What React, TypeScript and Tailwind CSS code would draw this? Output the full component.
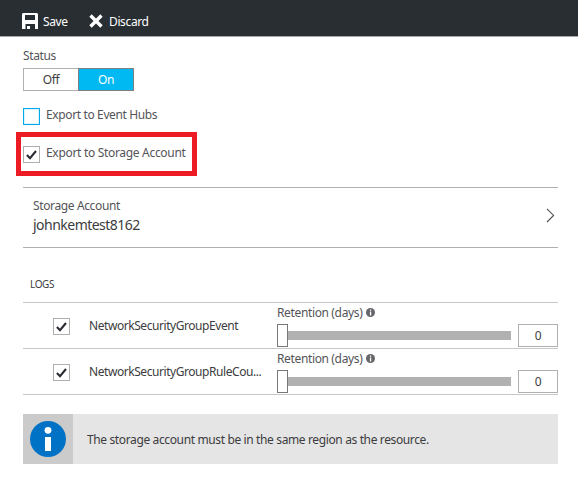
import React from "react";

function Check() {
  return (
    <svg width="11" height="10" viewBox="0 0 11 10" fill="none" className="block">
      <path d="M0.9 5.1 L4 8.2 L10 1" stroke="#2a2d33" strokeWidth="2.1" />
    </svg>
  );
}

function Checkbox({ checked, accent }: { checked: boolean; accent?: boolean }) {
  return (
    <span
      role="checkbox"
      aria-checked={checked}
      className={`flex size-[17px] shrink-0 items-center justify-center border bg-white ${
        accent ? "border-[#00abec] shadow-[inset_0_0_0_1px_#d9f4fd]" : "border-[#afafb0]"
      }`}
    >
      {checked && <Check />}
    </span>
  );
}

function LogRow({ name }: { name: string }) {
  return (
    <div className="flex h-[46px] border-b border-[#c8c8c8]">
      <div className="pt-[15px] pl-[30px]">
        <Checkbox checked />
      </div>
      <div className="ml-[19px] w-[188px] pt-[15px] tracking-[-0.44px] whitespace-nowrap text-[#3c3c40]">{name}</div>
      <div className="w-[234px]">
        <div className="flex h-[21px] items-start pt-[2px]">
          <span className="w-[86px] tracking-[-0.36px] whitespace-nowrap">Retention (days)</span>
          <svg width="9" height="9" viewBox="0 0 9 9" className="mt-[3px] ml-[3px]">
            <circle cx="4.5" cy="4.5" r="4.5" fill="#66666a" />
            <path d="M3.9 1.5h1.3v1.2H3.9zM3.9 3.5h1.3v4H3.9z" fill="#fff" />
          </svg>
        </div>
        <div className="flex h-[23px] items-center">
          <div className="h-[23px] w-[11px] border border-[#777] bg-white" />
          <div className="h-[9px] flex-1 bg-[#b1b1b1]" />
        </div>
      </div>
      <div className="mt-[21px] ml-[7px] flex h-[23px] w-10 items-center justify-center border border-[#afafaf] bg-white text-[#3c3c40]">
        0
      </div>
    </div>
  );
}

export default function App() {
  return (
    <div className="h-[495px] w-[578px] overflow-hidden bg-white font-['Noto_Sans',sans-serif] text-[12px] leading-4 tracking-[-0.37px] text-[#545458]">
      <header className="flex h-[37px] border-b border-[#a5a7a8] bg-[#292e32] pl-[22px] text-white">
        <svg width="16" height="16" viewBox="0 0 16 16" className="mt-[13px]">
          <path fill="#fff" d="M1 0H15L16 1V16H0V1Z" />
          <path fill="#292e32" d="M3 2H13V7H3ZM3.5 11H13V16H8V13H5V16H3.5Z" />
        </svg>
        <span className="mt-[14px] ml-[5px] w-[26px]">Save</span>
        <svg width="14" height="14" viewBox="0 0 14 14" className="mt-[14px] ml-[20px]">
          <path d="M1.5 1.5 L12.5 12.5 M12.5 1.5 L1.5 12.5" stroke="#fff" strokeWidth="3.4" />
        </svg>
        <span className="mt-[14px] ml-[6px]">Discard</span>
      </header>

      <main className="pr-5 pl-[23px]">
        <div className="pt-[11px]">Status</div>
        <div className="mt-1 flex h-[23px] w-[111px] text-center leading-[21px]">
          <div className="w-[55px] border border-r-0 border-[#afafb0] text-[#3c3c40]">Off</div>
          <div className="w-14 border border-[#808080] bg-[#00b9f2] text-white">On</div>
        </div>

        <div className="mt-[17px] flex h-[17px]">
          <Checkbox checked={false} accent />
          <span className="-mt-px ml-[6px]">Export to Event Hubs</span>
        </div>

        <div className="mt-[7px] -ml-[7px] flex h-[44px] w-[181px] border-[5px] border-[#ed1c24] pt-[9px] pl-[2px]">
          <Checkbox checked />
          <span className="-mt-px ml-[6px] tracking-[-0.31px] whitespace-nowrap">Export to Storage Account</span>
        </div>

        <div className="mt-[11px] flex h-[61px] items-start justify-between border-y border-[#afafb0] pl-[10px]">
          <div className="pt-[10px]">
            <div>Storage Account</div>
            <div className="mt-px text-[14px] leading-5 tracking-[-0.52px] text-[#3c3c40]">johnkemtest8162</div>
          </div>
          <svg width="9" height="15" viewBox="0 0 9 15" fill="none" className="mt-[20px] mr-[3px]">
            <path d="M1 0.8 L7.6 7.4 L1 14" stroke="#55565a" strokeWidth="1.2" />
          </svg>
        </div>

        <div className="h-[55px] border-b border-[#c8c8c8] pt-[28px] pl-[7px] text-[10px] text-[#3c3c40]">LOGS</div>
        <LogRow name="NetworkSecurityGroupEvent" />
        <LogRow name="NetworkSecurityGroupRuleCou..." />

        <div className="mt-[19px] flex h-[50px] items-center bg-[#e5e5e5]">
          <div className="flex size-[50px] items-center justify-center bg-[#cbcbcb]">
            <svg width="36" height="36" viewBox="0 0 36 36">
              <circle cx="18" cy="18" r="18" fill="#0072c6" />
              <circle cx="18" cy="9.3" r="3.4" fill="#fff" />
              <path d="M15 16h6v14h-6z" fill="#fff" />
            </svg>
          </div>
          <span className="mt-[2px] ml-[14px] text-[#3c3c40]">
            The storage account must be in the same region as the resource.
          </span>
        </div>
      </main>
    </div>
  );
}
